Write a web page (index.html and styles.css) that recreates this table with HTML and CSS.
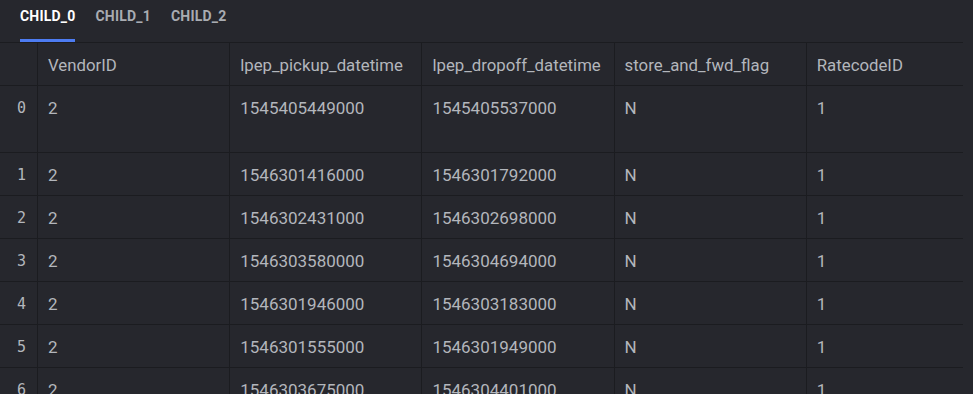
FILE: index.html
```html
<!DOCTYPE html>
<html lang="en">
<head>
    <meta charset="UTF-8" />
    <title>Child frames</title>
    <link rel="stylesheet" href="styles.css">
</head>
<body>
<div class="tabs">
    <span class="tab active">CHILD_0</span>
    <span class="tab">CHILD_1</span>
    <span class="tab">CHILD_2</span>
</div>

<table class="frame">
    <thead>
    <tr>
        <th class="idx"></th>
        <th>VendorID</th>
        <th>lpep_pickup_datetime</th>
        <th>lpep_dropoff_datetime</th>
        <th>store_and_fwd_flag</th>
        <th class="last">RatecodeID</th>
    </tr>
    </thead>
    <tbody>
    <tr class="tall">
        <td class="idx">0</td><td>2</td><td>1545405449000</td><td>1545405537000</td><td>N</td><td>1</td>
    </tr>
    <tr>
        <td class="idx">1</td><td>2</td><td>1546301416000</td><td>1546301792000</td><td>N</td><td>1</td>
    </tr>
    <tr>
        <td class="idx">2</td><td>2</td><td>1546302431000</td><td>1546302698000</td><td>N</td><td>1</td>
    </tr>
    <tr>
        <td class="idx">3</td><td>2</td><td>1546303580000</td><td>1546304694000</td><td>N</td><td>1</td>
    </tr>
    <tr>
        <td class="idx">4</td><td>2</td><td>1546301946000</td><td>1546303183000</td><td>N</td><td>1</td>
    </tr>
    <tr>
        <td class="idx">5</td><td>2</td><td>1546301555000</td><td>1546301949000</td><td>N</td><td>1</td>
    </tr>
    <tr>
        <td class="idx">6</td><td>2</td><td>1546303675000</td><td>1546304401000</td><td>N</td><td>1</td>
    </tr>
    </tbody>
</table>
</body>
</html>
```

FILE: styles.css
```css
body {
    margin: 0;
    background: #26272d;
    font-family: Roboto, "Liberation Sans", sans-serif;
    color: #b3b6bc;
    overflow: hidden;
}
.tabs {
    display: flex;
    gap: 20px;
    padding: 0 20px;
    height: 42px;
    box-sizing: border-box;
}
.tab {
    font-size: 14px;
    font-weight: 700;
    letter-spacing: 0.2px;
    color: #a9acb2;
    line-height: 16px;
    padding-top: 8px;
    border-bottom: 3px solid transparent;
    height: 42px;
    box-sizing: border-box;
}
.tab.active {
    color: #ffffff;
    border-bottom-color: #4d7cf2;
}

.frame {
    border-collapse: collapse;
    table-layout: fixed;
    width: 963px;
}
.frame th, .frame td {
    border: 1px solid #1b1c20;
    padding: 12px 10px 10px;
    line-height: 20px;
    text-align: left;
    font-weight: 400;
    vertical-align: top;
    width: 171px;
    white-space: nowrap;
    overflow: hidden;
}
.frame th { font-size: 16.8px; }
.frame td { font-size: 17px; }
.frame th:first-child, .frame td:first-child { border-left: none; }
.frame th:last-child, .frame td:last-child { border-right: none; }
.frame th.last { width: 136px; }
.frame .idx {
    width: 17px;
    padding: 12px 11px 10px 9px;
    text-align: right;
    font-family: "DejaVu Sans Mono", monospace;
    font-size: 15px;
}
.frame tr.tall td { height: 44px; }
```
